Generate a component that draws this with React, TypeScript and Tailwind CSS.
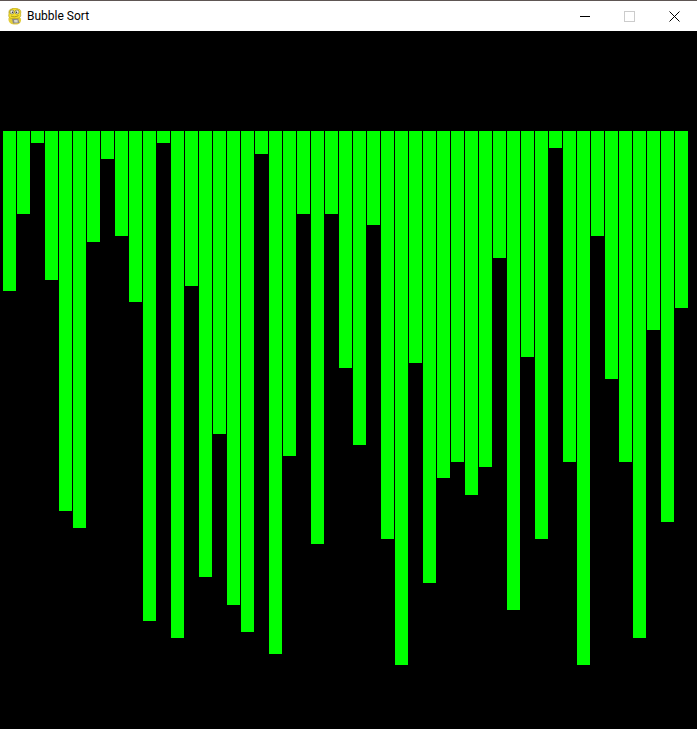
// bottom edge of each bar, read off the screenshot (bars all start at y=131)
const BAR_BOTTOMS = [
  291, 214, 143, 280, 511, 528, 242, 159, 236, 302, 621, 143, 638, 286, 577, 434, 605,
  632, 154, 654, 456, 214, 544, 214, 368, 445, 225, 539, 665, 363, 583, 478, 462, 495,
  467, 258, 610, 357, 539, 148, 462, 665, 236, 379, 462, 638, 330, 522, 308,
];
const BAR_TOP = 131;

function PygameIcon() {
  return (
    <svg width="15" height="17" viewBox="0 0 15 17">
      <path d="M1.5 10 C1 13.5 3 16.5 7 16.5 L10 16.5 C13 16 14.5 13.5 14 10.5 L12 9 L3 9 Z" fill="#e3cd3c" />
      <path d="M5 11 L11 10.5 L12.5 15 L6 15.5 Z" fill="#8d8a80" />
      <path d="M7 12 L10.5 11.8 L10.8 14.5 L7.4 14.6 Z" fill="#d6d6ce" />
      <path d="M2 6 C1.5 3 2.5 1 4.5 1 C6 -0.2 10 -0.2 11 1 C13.5 1 14.5 3.5 13.5 6 C14.5 8.5 12.5 10.5 10 10.5 L5 10.5 C2.5 10.5 1 8.5 2 6 Z" fill="#f2dc2c" stroke="#b09a18" strokeWidth="0.6" />
      <circle cx="5" cy="4" r="2" fill="#f7f7ec" stroke="#5a5a40" strokeWidth="0.6" />
      <circle cx="10" cy="4" r="2" fill="#f7f7ec" stroke="#5a5a40" strokeWidth="0.6" />
      <circle cx="5.4" cy="4.3" r="0.7" fill="#222" />
      <circle cx="9.6" cy="4.3" r="0.7" fill="#222" />
      <path d="M4 8 C6 9.2 9 9.2 11.5 7.5" fill="none" stroke="#8a7a12" strokeWidth="0.7" />
    </svg>
  );
}

function TitleBar() {
  return (
    <div className="flex h-[31px] items-center border-t border-[#5e5654] bg-white">
      <div className="flex flex-1 items-center pl-[7px]">
        <PygameIcon />
        <span className="ml-[5px] text-xs text-black [font-family:Roboto,sans-serif]">
          Bubble Sort
        </span>
      </div>
      <div className="flex h-full">
        <div className="flex w-[45px] items-center justify-center">
          <svg width="10" height="10" viewBox="0 0 10 10">
            <path d="M0 5.5 H10" stroke="#000" strokeWidth="1" />
          </svg>
        </div>
        <div className="flex w-[45px] items-center justify-center">
          <div className="size-[11px] border border-[#cccccc]" />
        </div>
        <div className="flex w-[45px] items-center justify-center">
          <svg width="11" height="11" viewBox="0 0 11 11">
            <path d="M0.5 0.5 L10.5 10.5 M10.5 0.5 L0.5 10.5" stroke="#000" strokeWidth="1" fill="none" />
          </svg>
        </div>
      </div>
    </div>
  );
}

export default function App() {
  return (
    <div className="flex h-[729px] w-[697px] flex-col overflow-hidden bg-black">
      <TitleBar />
      <div className="flex flex-1 items-start gap-px pl-[3px] pt-[100px]">
        {BAR_BOTTOMS.map((bottom, i) => (
          <div
            key={i}
            className="w-[13px] bg-[#00ff00]"
            style={{ height: bottom - BAR_TOP }}
          />
        ))}
      </div>
    </div>
  );
}
